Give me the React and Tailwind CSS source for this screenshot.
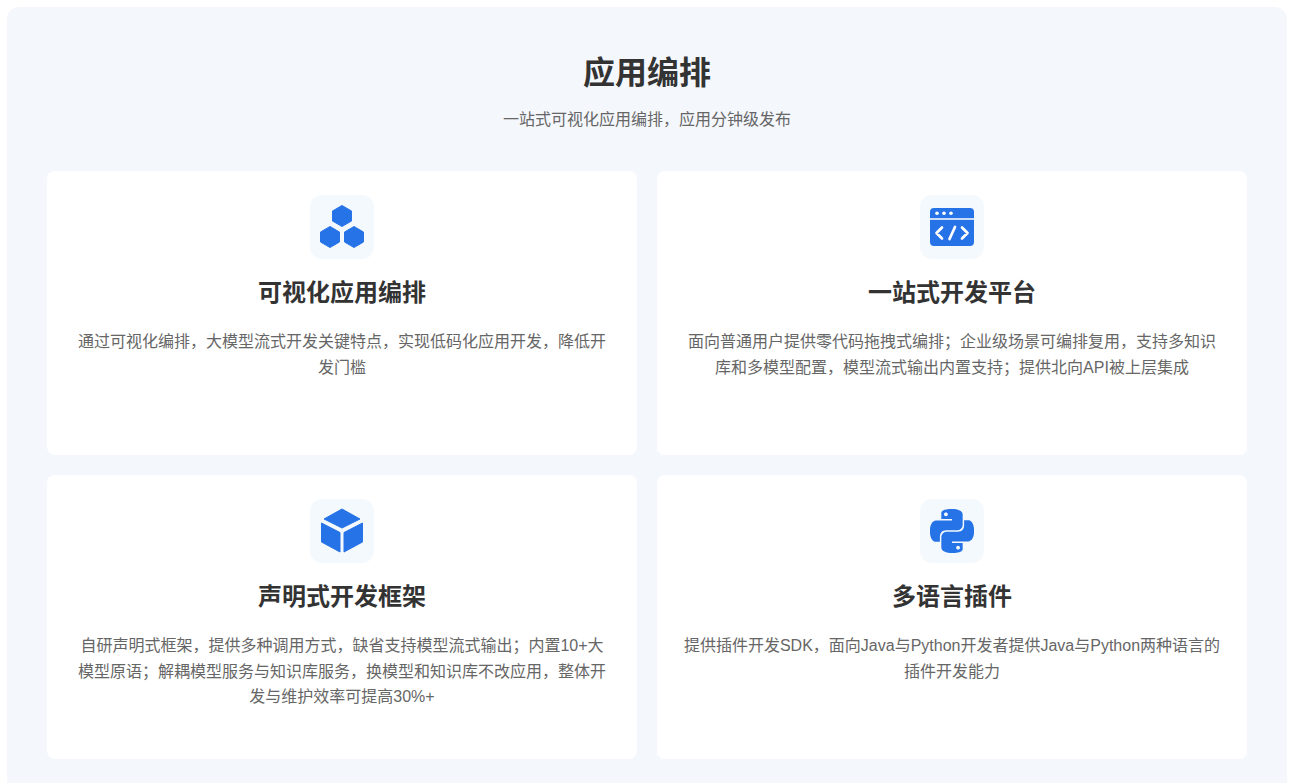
import React from "react";
import { SiPython } from "react-icons/si";

const HexIcon = () => (
  <svg width="64" height="64" viewBox="0 0 64 64" fill="#2673e8" stroke="#2673e8" strokeWidth="1" strokeLinejoin="round">
    <path d="M32 10.500 41.500 16v10L32 31.500 22.500 26V16z" />
    <path d="M20 31.500 29.500 37v10L20 52.500 10.500 47V37z" />
    <path d="M44 31.500 53.500 37v10L44 52.500 34.500 47V37z" />
  </svg>
);

const CodeIcon = () => (
  <svg width="64" height="64" viewBox="0 0 64 64" fill="none">
    <rect x="10" y="13" width="44" height="38" rx="4" fill="#2673e8" />
    <path d="M10 24h44" stroke="#fff" strokeWidth="1.6" />
    <circle cx="17" cy="18.300" r="1.800" fill="#fff" />
    <circle cx="24" cy="18.300" r="1.800" fill="#fff" />
    <circle cx="31" cy="18.300" r="1.800" fill="#fff" />
    <path d="M22 32.500 16.500 38l5.500 5.500M42 32.500l5.500 5.500-5.500 5.500M35 32 29.500 44" stroke="#fff" strokeWidth="2.700" strokeLinecap="round" strokeLinejoin="round" />
  </svg>
);

const CubeIcon = () => (
  <svg width="64" height="64" viewBox="0 0 64 64" fill="#2673e8" stroke="#2673e8" strokeWidth="1" strokeLinejoin="round">
    <path d="M32 10 50 20 32 29 14 20z" />
    <path d="M11.500 24 30 33.500V53L11.500 43z" />
    <path d="M52.500 24 34 33.500V53L52.500 43z" />
  </svg>
);

const PythonIcon = () => <SiPython size={44} color="#2673e8" />;

const cards = [
  {
    icon: <HexIcon />,
    title: "可视化应用编排",
    desc: "通过可视化编排，大模型流式开发关键特点，实现低码化应用开发，降低开发门槛",
  },
  {
    icon: <CodeIcon />,
    title: "一站式开发平台",
    desc: "面向普通用户提供零代码拖拽式编排；企业级场景可编排复用，支持多知识库和多模型配置，模型流式输出内置支持；提供北向API被上层集成",
  },
  {
    icon: <CubeIcon />,
    title: "声明式开发框架",
    desc: "自研声明式框架，提供多种调用方式，缺省支持模型流式输出；内置10+大\n模型原语；解耦模型服务与知识库服务，换模型和知识库不改应用，整体开发与维护效率可提高30%+",
  },
  {
    icon: <PythonIcon />,
    title: "多语言插件",
    desc: "提供插件开发SDK，面向Java与Python开发者提供Java与Python两种语言的插件开发能力",
  },
];

export default function App() {
  return (
    <div className="h-[783px] overflow-hidden bg-white p-[7px] font-['Liberation_Sans','Noto_Sans_CJK_SC',sans-serif]">
      <div className="rounded-xl bg-[#f4f7fc] p-10">
        <div className="mb-[38px] text-center">
          <h1 className="mb-2 text-[32px] leading-[52px] font-bold text-[#333]">应用编排</h1>
          <p className="text-base leading-[26px] text-[#666]">一站式可视化应用编排，应用分钟级发布</p>
        </div>
        <div className="grid grid-cols-2 gap-5">
          {cards.map((card) => (
            <div key={card.title} className="h-[284px] rounded-lg bg-white px-6 pt-6 text-center">
              <div className="mx-auto mb-4 flex h-16 w-16 items-center justify-center rounded-xl bg-[#f4f9fe]">
                {card.icon}
              </div>
              <h3 className="mb-[18px] text-2xl leading-9 font-bold text-[#333]">{card.title}</h3>
              <p className="text-base leading-[25.6px] whitespace-pre-line text-[#666]">{card.desc}</p>
            </div>
          ))}
        </div>
      </div>
    </div>
  );
}
